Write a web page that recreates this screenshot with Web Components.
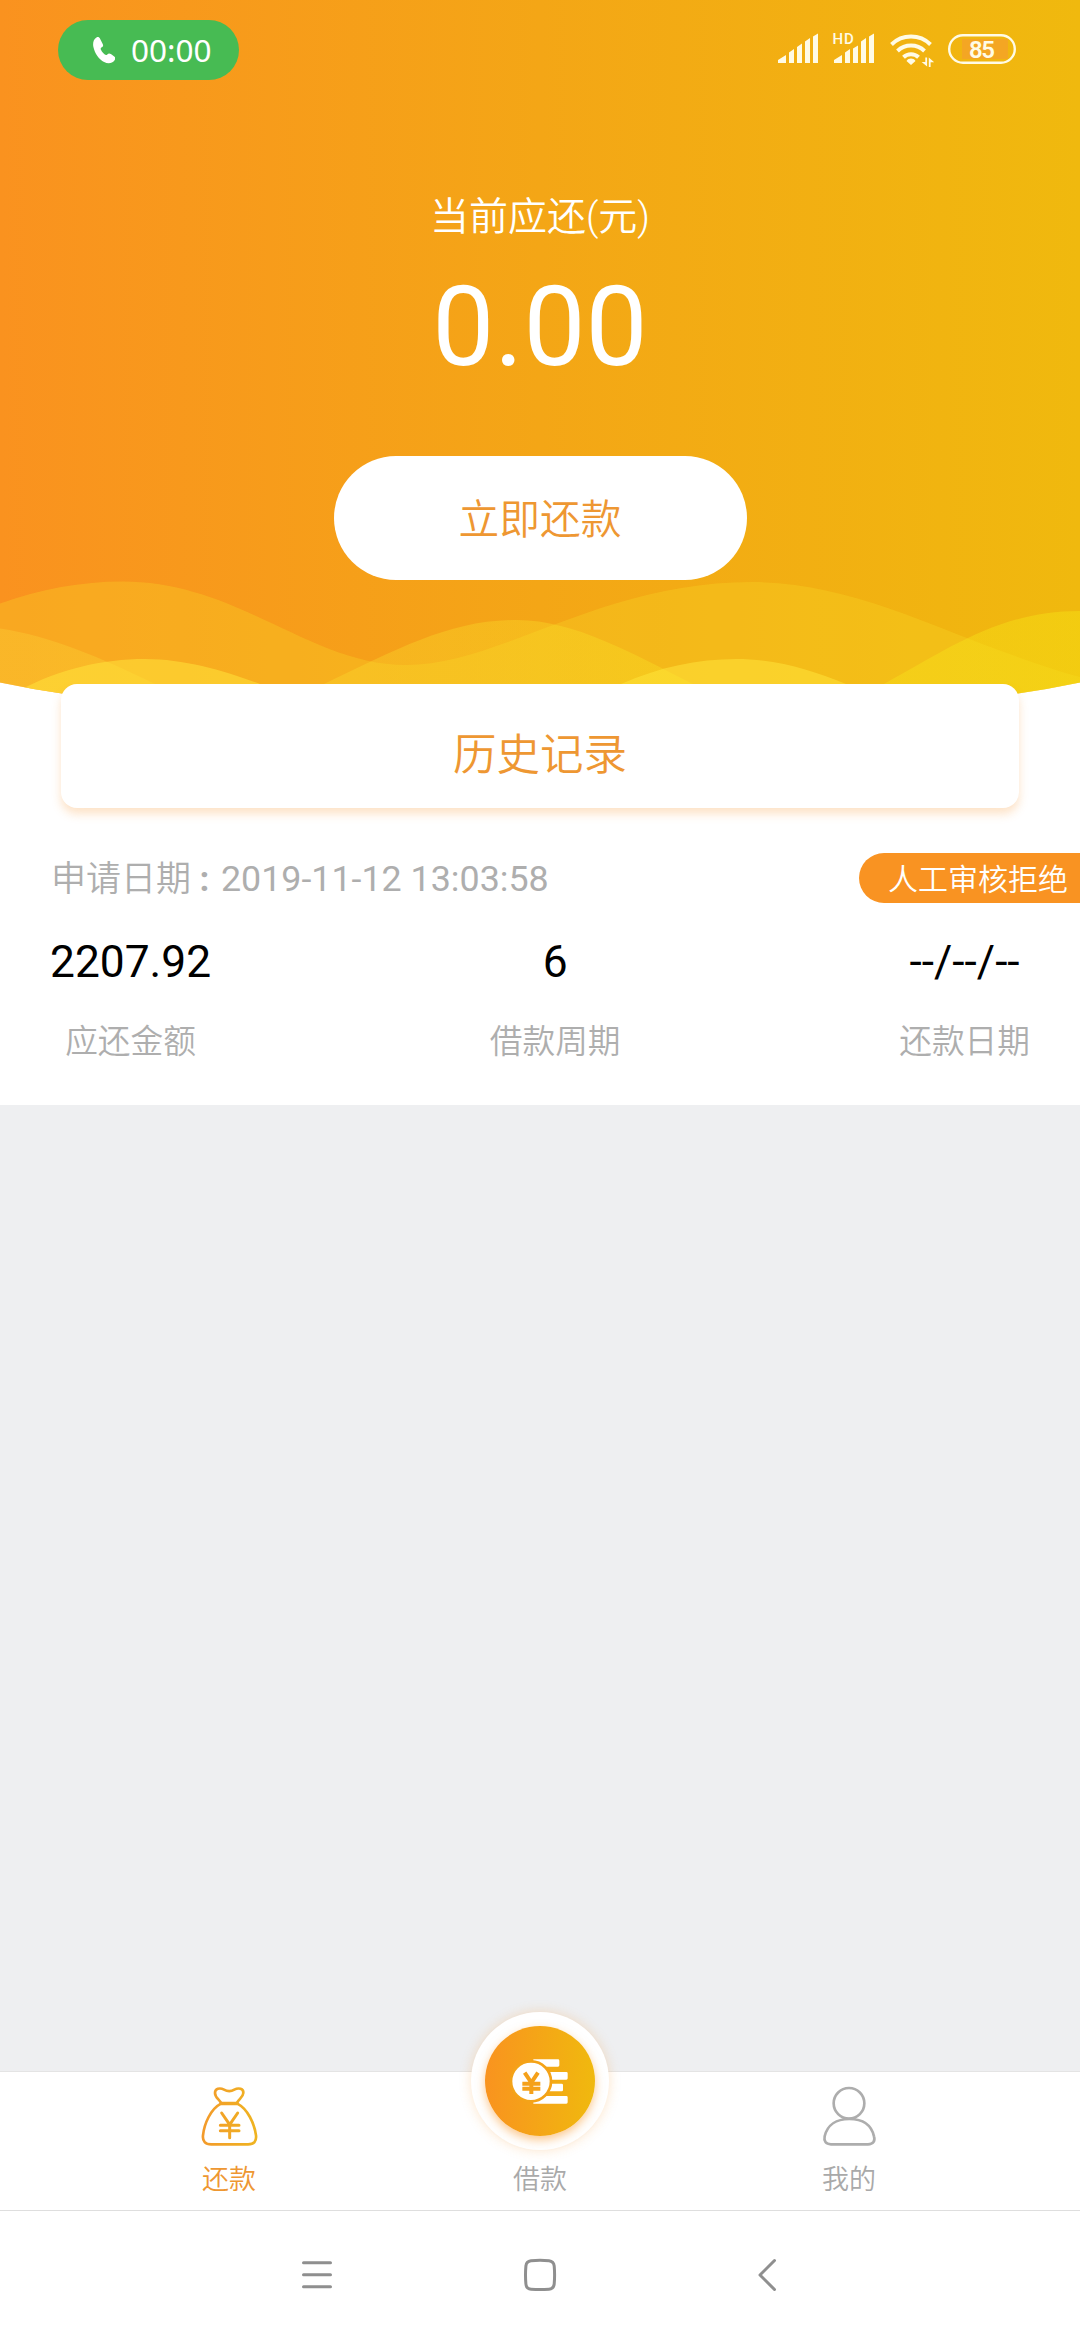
<!DOCTYPE html>
<html lang="zh-CN">
<head>
<meta charset="utf-8">
<title>还款</title>
<style>
body {
  margin: 0;
  font-family: Roboto, "Noto Sans CJK SC", sans-serif;
}
</style>
</head>
<body>
<loan-app></loan-app>

<script>
/** Shared base: renders the static `template` of the subclass in an open shadow root. */
class BaseElement extends HTMLElement {
  constructor() {
    super();
    const template = document.createElement('template');
    template.innerHTML = this.constructor.template;
    this.attachShadow({mode: 'open'});
    this.shadowRoot.appendChild(template.content.cloneNode(true));
  }
}

class StatusBar extends BaseElement {
  static get template() {
    return `
<style>
:host {
  display: flex;
  justify-content: space-between;
  align-items: flex-start;
  height: 60px;
  padding: 20px 62px 0 58px;
  color: #fffbe6;
}
.call {
  display: flex;
  align-items: center;
  box-sizing: border-box;
  width: 181px;
  height: 60px;
  padding-left: 35px;
  gap: 16px;
  border-radius: 30px;
  background: #47bb53;
  color: #fff;
  font: 400 31.500px/60px "Noto Sans", sans-serif;
}
.icons {
  display: flex;
}
svg {
  display: block;
}
text {
  font-family: Roboto, sans-serif;
}
</style>
<div class="call">
  <svg width="22" height="27" viewBox="0 0 22 27"><path fill="#fff" d="M3.5.4C5-.3 6.300.3 7.200 2L9.700 7c.8 1.500.4 2.500-1 3.300-1.200.7-1.300 1.400-.6 2.800 1 2 2.200 3.400 3.700 4.500 1 .7 1.700.6 2.500-.2 1.200-1.100 2.200-1.200 3.600-.3l3 2.100c1.600 1.100 1.800 2.600.5 4.300-2.200 3-6.300 3.600-10.300 1.600C6.200 22.600 1.700 16.300.4 10 -.4 6 .4 2 3.500.4z"/></svg>
  <span>00:00</span>
</div>
<div class="icons">
  <svg width="240" height="48" viewBox="0 -12 240 48" fill="#fffbe6">
    <path d="M0 31v-3l8-5v8zM11 31V20.500l5-3.500v14zM19 31V15l5-3.500V31zM27 31V9.500L32 6v25zM35 31V4.500L40 1.500V31z"/>
    <path d="M56 31v-3l8-5v8zM67 31V20.500l5-3.500v14zM75 31V16.500l5-3V31zM83 31V9.500L88 6v25zM91 31V4.500L96 1.500V31z"/>
    <text x="54.500" y="12" font-size="15" font-weight="500" letter-spacing=".8">HD</text>
    <g fill="none" stroke="#fffbe6" stroke-width="4">
      <path d="M113.500 12.500a28 28 0 0 1 39 0"/>
      <path d="M119.500 19a19.500 19.500 0 0 1 27 0"/>
      <path d="M125.500 25.200a10.800 10.800 0 0 1 15 0"/>
    </g>
    <path d="M133 33l-4.500-4c2.200-3.200 6.800-3.200 9 0z"/>
    <path d="M147.300 25.500h1.800v9L143.600 30h3.700zM150.800 35v-9.500l5.400 4.800h-3.600V35z"/>
    <rect x="184" y="7" width="46" height="20" fill="#f4a623"/>
    <rect x="171.200" y="3.200" width="65.600" height="27.600" rx="13.800" fill="none" stroke="#fffbe6" stroke-width="2.400"/>
    <text x="204" y="25.500" font-size="24" font-weight="600" text-anchor="middle" textLength="26">85</text>
  </svg>
</div>`;
  }
}
customElements.define('status-bar', StatusBar);

class RepayHero extends BaseElement {
  static get template() {
    return `
<style>
:host {
  display: flex;
  flex-direction: column;
  position: relative;
  height: 684px;
  color: #fff;
  text-align: center;
}
/* gradient and waves lie under the header texts */
.waves {
  position: absolute;
  top: 0;
  left: 0;
}
status-bar {
  position: relative;
}
.due {
  display: flex;
  flex-direction: column;
  align-items: center;
  position: relative;
  padding-top: 109px;
}
.label {
  font-size: 39px;
  font-weight: 350;
  line-height: 56px;
}
.amount {
  margin-top: 17px;
  font-size: 110.500px;
  line-height: 130px;
}
button {
  width: 413px;
  height: 124px;
  margin-top: 64px;
  padding: 5px 0 0;
  border: 0;
  border-radius: 62px;
  background: #fff;
  color: #ee9732;
  font: 350 40.700px/119px Roboto, "Noto Sans CJK SC", sans-serif;
}
</style>
<svg class="waves" width="1080" height="720" viewBox="0 0 1080 720">
  <defs>
    <linearGradient id="sky">
      <stop offset="0" stop-color="#fa921f"/>
      <stop offset=".5" stop-color="#f4a616"/>
      <stop offset="1" stop-color="#f0b90e"/>
    </linearGradient>
    <linearGradient id="mid">
      <stop offset="0" stop-color="#fcdc3c" stop-opacity=".28"/>
      <stop offset="1" stop-color="#f6e614" stop-opacity=".42"/>
    </linearGradient>
    <clipPath id="edge"><path d="M0 0H1080V682.500Q1049 689 1018 693.500Q540 740 62 693.500Q31 689 0 682.500z"/></clipPath>
  </defs>
  <g clip-path="url(#edge)">
    <path fill="url(#sky)" d="M0 0H1080V720H0z"/>
    <path fill="#f8dc28" fill-opacity=".3" d="M0 603.500C40 589 82 581.500 122 581.500C239 581.500 310 665 406 665C500 665 600 582 752 582C865 582 960 644 1080 677V720H0z"/>
    <path fill="url(#mid)" d="M0 628.500C50 636 100 657 155 684L220 720H250L324 684C400 648 450 620 517 620C575 620 635 655 693 684L760 720H820L884 684C950 648 1000 611 1080 611V720H0z"/>
    <path fill="#ffe63c" fill-opacity=".52" d="M20 690C60 669 102 659 145 659C185 659 225 671 260 684L340 720H0zM560 710L621 684C660 667 697 659 736 659C775 659 812 670 846 684L920 720H560z"/>
  </g>
</svg>
<status-bar></status-bar>
<div class="due">
  <div class="label">当前应还(元)</div>
  <div class="amount"><slot></slot></div>
  <button>立即还款</button>
</div>`;
  }
}
customElements.define('repay-hero', RepayHero);

class HistoryCard extends BaseElement {
  static get template() {
    return `
<style>
:host {
  display: block;
  position: relative;
  box-sizing: border-box;
  height: 124px;
  margin: 0 61px;
  padding-top: 10px;
  border-radius: 16px;
  background: #fff;
  box-shadow: 0 6px 10px rgba(246, 150, 50, .27);
  color: #ee9732;
  font-size: 43.500px;
  font-weight: 350;
  line-height: 124px;
  text-align: center;
}
</style>
<slot></slot>`;
  }
}
customElements.define('history-card', HistoryCard);

class RecordField extends BaseElement {
  static get template() {
    return `
<style>
:host {
  display: flex;
  flex-direction: column;
  align-items: center;
}
.value {
  color: #000;
  font-size: 44.300px;
  line-height: 60px;
}
.name {
  margin-top: 26px;
  color: #aeaeae;
  font-size: 32.700px;
  font-weight: 350;
  line-height: 48px;
}
</style>
<div class="value"><slot></slot></div>
<div class="name"></div>`;
  }

  static get observedAttributes() {
    return ['name'];
  }

  attributeChangedCallback(attributeName, _oldValue, newValue) {
    this.shadowRoot.querySelector('.name').textContent = newValue;
  }
}
customElements.define('record-field', RecordField);

class LoanRecord extends BaseElement {
  static get template() {
    return `
<style>
:host {
  display: block;
  height: 252px;
  padding-top: 45px;
}
.head {
  display: flex;
  justify-content: space-between;
  height: 54px;
  padding-left: 51px;
  color: #aeaeae;
  font-size: 35.800px;
  line-height: 53px;
}
.date {
  display: flex;
}
.caption {
  width: 170px;
  font-size: 35px;
  font-weight: 350;
  line-height: 54px;
}
.caption b {
  font-weight: 700;
}
.badge {
  height: 50px;
  box-sizing: border-box;
  width: 221px;
  padding-left: 29px;
  border-radius: 25px 0 0 25px;
  background: #f99322;
  color: #fff;
  font-size: 30px;
  font-weight: 350;
  line-height: 53px;
  white-space: nowrap;
}
.fields {
  display: flex;
  justify-content: space-between;
  padding: 25px 50px 0;
}
</style>
<div class="head">
  <div class="date"><span class="caption">申请日期 <b>:</b></span><slot name="date"></slot></div>
  <div class="badge"><slot name="state"></slot></div>
</div>
<div class="fields"><slot></slot></div>`;
  }
}
customElements.define('loan-record', LoanRecord);

class TabItem extends BaseElement {
  static get template() {
    return `
<style>
:host {
  display: flex;
  flex-direction: column;
  align-items: center;
  justify-content: flex-end;
  height: 128px;
  padding-bottom: 10px;
  color: #a9a9a9;
  font-size: 27px;
  font-weight: 350;
  line-height: 40px;
}
:host([active]) {
  color: #ee9732;
}
</style>
<slot name="icon"></slot>
<span><slot></slot></span>`;
  }
}
customElements.define('tab-item', TabItem);

class TabBar extends BaseElement {
  static get template() {
    return `
<style>
:host {
  display: grid;
  grid-template-columns: 310px 310px 310px;
  box-sizing: border-box;
  height: 139px;
  padding: 0 76px 0 74px;
  border-top: 1px solid #e4e4e4;
  background: #fff;
}
svg {
  display: block;
  overflow: visible;
}
.line {
  margin-bottom: 12px;
}
.loan {
  padding-left: 2px;
}
.fab {
  display: flex;
  flex: none;
  align-items: center;
  justify-content: center;
  width: 138px;
  height: 138px;
  margin-bottom: 10px;
  border-radius: 50%;
  background: #fff;
  box-shadow: 0 0 12px rgba(249, 147, 34, .25);
}
.disc {
  width: 110px;
  height: 110px;
  border-radius: 50%;
  background: linear-gradient(90deg, #f9931f, #f0b90e);
  box-shadow: 0 4px 10px rgba(249, 147, 34, .5);
}
</style>
<tab-item active>
  <svg class="line" slot="icon" width="60" height="64" viewBox="57 72 180 192" fill="none" stroke="url(#gold)" stroke-width="8" stroke-linecap="round" stroke-linejoin="round">
    <defs>
      <linearGradient id="gold" gradientUnits="userSpaceOnUse" x1="65" y1="0" x2="232" y2="0">
        <stop offset="0" stop-color="#f39a2b"/><stop offset="1" stop-color="#efb420"/>
      </linearGradient>
    </defs>
    <path d="M123 128C116 117 105 112 105 99C105 86 119 82 132 89Q148 98 163 89C176 82 191 86 190 99C189 112 178 116 171 128"/>
    <path d="M123 131C92 147 73 190 69 226C67 244 76 253 94 253H204C222 253 230 244 228 226C223 190 203 147 172 131"/>
    <path d="M123 130.500H172" stroke-width="10"/>
    <path d="M125 159L149 194L173 159M149 194V233M121 196H177M121 212H177" stroke-width="9"/>
  </svg>
  还款
</tab-item>
<tab-item class="loan">
  <div class="fab" slot="icon">
    <div class="disc">
      <svg width="110" height="110" viewBox="135 135 330 330" fill="#fff">
        <path d="M280 235H354Q358 235 358 239V253Q358 257 354 257H280zM300 273H379Q383 273 383 277V292Q383 296 379 296H300zM300 308H365Q369 308 369 312V327Q369 331 365 331H300zM280 345H379Q383 345 383 349V364Q383 368 379 368H280z"/>
        <circle cx="273" cy="301" r="60" stroke="#f4a318" stroke-width="8"/>
        <path d="M254 275L274 305L294 275M274 305V339M247 308H301M247 323H301" fill="none" stroke="#f5a11a" stroke-width="12"/>
      </svg>
    </div>
  </div>
  借款
</tab-item>
<tab-item>
  <svg class="line" slot="icon" width="60" height="64" viewBox="57 72 180 192" fill="none" stroke="#adadad" stroke-width="8">
    <circle cx="147" cy="130" r="46"/>
    <path d="M93 253C77 253 71 243 74 229C82 194 110 177 148 177C187 177 214 194 222 229C226 243 220 253 204 253z"/>
  </svg>
  我的
</tab-item>`;
  }
}
customElements.define('tab-bar', TabBar);

class SystemNav extends BaseElement {
  static get template() {
    return `
<style>
:host {
  display: flex;
  justify-content: space-between;
  box-sizing: border-box;
  height: 130px;
  padding: 47px 300px 0;
  border-top: 1px solid #dedede;
  background: #fff;
}
svg {
  fill: none;
  stroke: #8f8f8f;
  stroke-width: 3;
  stroke-linecap: round;
  stroke-linejoin: round;
}
</style>
<svg width="34" height="34" viewBox="0 0 34 34"><path d="M3.500 4.700h27M3.500 16.700h27M3.500 28.700h27"/></svg>
<svg width="34" height="34" viewBox="0 0 34 34"><path d="M8 2.700Q17 1.900 26 2.700Q30.700 3.200 31.200 8Q32 17 31.200 26Q30.700 30.800 26 31.200Q17 32 8 31.200Q3.300 30.800 2.900 26Q2.100 17 2.900 8Q3.300 3.200 8 2.700z"/></svg>
<svg width="34" height="34" viewBox="0 0 34 34"><path d="M28.500 2.500L14 17L28.500 31.500"/></svg>`;
  }
}
customElements.define('system-nav', SystemNav);

class LoanApp extends BaseElement {
  static get template() {
    return `
<style>
:host {
  display: flex;
  flex-direction: column;
  height: 2340px;
  background: #fff;
}
.rest {
  flex: 1;
  background: #eeeff1;
}
tab-bar {
  flex: none;
}
</style>
<repay-hero>0.00</repay-hero>
<history-card>历史记录</history-card>
<loan-record>
  <span slot="date">2019-11-12 13:03:58</span>
  <span slot="state">人工审核拒绝</span>
  <record-field name="应还金额">2207.92</record-field>
  <record-field name="借款周期">6</record-field>
  <record-field name="还款日期">--/--/--</record-field>
</loan-record>
<div class="rest"></div>
<tab-bar></tab-bar>
<system-nav></system-nav>`;
  }
}
customElements.define('loan-app', LoanApp);
</script>
</body>
</html>
